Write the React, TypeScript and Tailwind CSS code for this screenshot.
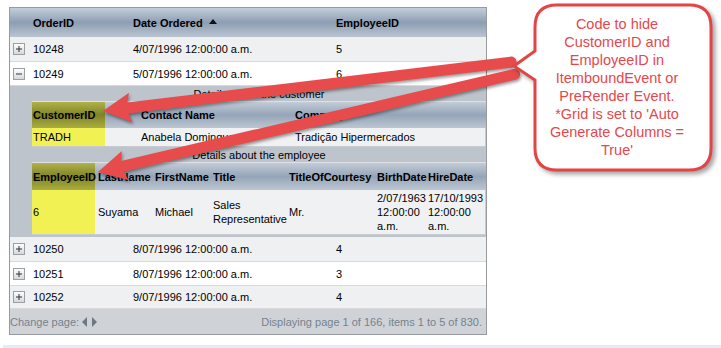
import React from 'react';

const orders = [
  { id: '10248', date: '4/07/1996 12:00:00 a.m.', emp: '5', alt: true },
  { id: '10249', date: '5/07/1996 12:00:00 a.m.', emp: '6', alt: false, open: true },
  { id: '10250', date: '8/07/1996 12:00:00 a.m.', emp: '4', alt: true },
  { id: '10251', date: '8/07/1996 12:00:00 a.m.', emp: '3', alt: false },
  { id: '10252', date: '9/07/1996 12:00:00 a.m.', emp: '4', alt: true },
];

const calloutLines = [
  'Code to hide',
  'CustomerID and',
  'EmployeeID in',
  'ItemboundEvent or',
  'PreRender Event.',
  "*Grid is set to 'Auto",
  'Generate Columns =',
  "True'",
];

function ExpandButton({ open }: { open?: boolean }) {
  return (
    <svg width="12" height="12" viewBox="0 0 12 12" className="ml-[3px]">
      <defs>
        <linearGradient id={open ? 'btnOpen' : 'btnClosed'} x1="0" y1="0" x2="0" y2="1">
          <stop offset="0" stopColor="#ffffff" />
          <stop offset="1" stopColor="#d4d6d9" />
        </linearGradient>
      </defs>
      <rect x="0.5" y="0.5" width="11" height="11" fill={`url(#${open ? 'btnOpen' : 'btnClosed'})`} stroke="#9c9fa3" />
      <line x1="3" y1="6" x2="9" y2="6" stroke="#333" />
      {!open && <line x1="6" y1="3" x2="6" y2="9" stroke="#333" />}
    </svg>
  );
}

function Arrow({ x, y, angle, length }: { x: number; y: number; angle: number; length: number }) {
  return (
    <g transform={`translate(${x} ${y}) rotate(${angle})`}>
      <polygon
        points={`0,0 28,-15 25,-5.5 ${length},-5.5 ${length},5.5 25,5.5 28,15`}
        fill="#e84b4b"
      />
      <circle cx={length} cy={0} r={5.5} fill="#e84b4b" />
    </g>
  );
}

export default function App() {
  return (
    <div className="relative w-[721px] h-[348px] overflow-hidden bg-white font-['Liberation_Sans',Arial,sans-serif] text-[11px] leading-[14px] text-black">
      <div className="ml-[9px] mt-[7px] w-[478px] border border-[#979a9e]">
        {/* header */}
        <div className="flex h-[29px] items-center bg-gradient-to-b from-[#c4ceda] via-[#8d9eb3] to-[#bac5d1] font-bold">
          <div className="w-[22px]" />
          <div className="w-[101px] pl-px">OrderID</div>
          <div className="flex w-[203px] items-center gap-[6px]">
            Date Ordered
            <svg width="8" height="5" viewBox="0 0 8 5" className="-mt-[3px]">
              <polygon points="4,0 8,5 0,5" fill="#111" />
            </svg>
          </div>
          <div className="flex-1">EmployeeID</div>
        </div>

        {orders.map((o, i) => (
          <React.Fragment key={o.id}>
            <div
              className={`flex items-center border-b border-[#d7d9dc] ${o.alt ? 'bg-[#eff0f2]' : 'bg-white'} ${
                i === 0 ? 'h-[25px]' : i === 2 ? 'h-[25px]' : i === 4 ? 'h-[22px] border-b-0' : 'h-[24px]'
              }`}
            >
              <div className="flex w-[22px] items-center">
                <ExpandButton open={o.open} />
              </div>
              <div className="w-[101px] pl-px">{o.id}</div>
              <div className="w-[203px]">{o.date}</div>
              <div className="flex-1">{o.emp}</div>
            </div>

            {o.open && (
              <div className="bg-[#bdc4cc] pl-[22px] pb-[2px]">
                <div className="flex h-[15px] items-center justify-center">Details about the customer</div>

                <div className="flex h-[27px] items-center border-t border-[#dde1e6] bg-gradient-to-b from-[#c3ccd7] via-[#95a5b8] to-[#bcc6d1] font-bold">
                  <div className="flex h-full w-[108px] items-center">
                    <div className="flex h-full w-[73px] items-center bg-gradient-to-b from-[#b0b14a] via-[#808426] to-[#aaad40] pl-px">
                      CustomerID
                    </div>
                  </div>
                  <div className="w-[155px] pl-px">Contact Name</div>
                  <div className="flex-1">Company</div>
                </div>
                <div className="flex h-[19px] items-center border-r border-b border-[#c8ccd1] bg-[#f0f1f3]">
                  <div className="flex h-full w-[108px] items-center">
                    <div className="flex h-full w-[73px] items-center bg-[#f1f153] pl-px">TRADH</div>
                  </div>
                  <div className="w-[155px] pl-px">Anabela Domingues</div>
                  <div className="flex-1">Tradição Hipermercados</div>
                </div>

                <div className="flex h-[15px] items-center justify-center">Details about the employee</div>

                <div className="flex h-[28px] items-center border-t border-[#dde1e6] bg-gradient-to-b from-[#c3ccd7] via-[#95a5b8] to-[#bcc6d1] font-bold">
                  <div className="flex h-full w-[66px] items-center">
                    <div className="flex h-full w-[63px] items-center bg-gradient-to-b from-[#b0b14a] via-[#808426] to-[#aaad40] pl-px">
                      EmployeeID
                    </div>
                  </div>
                  <div className="w-[57px]">LastName</div>
                  <div className="w-[58px]">FirstName</div>
                  <div className="w-[76px]">Title</div>
                  <div className="w-[88px]">TitleOfCourtesy</div>
                  <div className="w-[51px]">BirthDate</div>
                  <div className="flex-1">HireDate</div>
                </div>
                <div className="flex h-[45px] items-center border-r border-b border-[#c8ccd1] bg-[#f0f1f3]">
                  <div className="flex h-full w-[66px] items-center">
                    <div className="flex h-full w-[63px] items-center bg-[#f1f153] pl-px">6</div>
                  </div>
                  <div className="w-[57px]">Suyama</div>
                  <div className="w-[58px]">Michael</div>
                  <div className="w-[76px]">Sales Representative</div>
                  <div className="w-[88px]">Mr.</div>
                  <div className="w-[51px]">2/07/1963 12:00:00 a.m.</div>
                  <div className="flex-1 whitespace-pre-line">{'17/10/1993\n12:00:00\na.m.'}</div>
                </div>
              </div>
            )}
          </React.Fragment>
        ))}

        {/* pager */}
        <div className="flex h-[26px] items-center justify-between border-t border-[#d7d9dc] bg-[#cfd3d8] text-[#77818c]">
          <div className="flex items-center">
            Change page:
            <svg width="20" height="10" viewBox="0 0 20 10" className="ml-[3px]">
              <polygon points="0,5 5,0 5,10" fill="#6d7884" />
              <polygon points="15,5 10,0 10,10" fill="#6d7884" />
            </svg>
          </div>
          <div className="pr-[4px]">Displaying page 1 of 166, items 1 to 5 of 830.</div>
        </div>
      </div>

      <div className="mt-[10px] ml-[3px] h-[3px] bg-[#e5eaf9]" />

      {/* annotation arrows */}
      <svg
        width="721"
        height="348"
        viewBox="0 0 721 348"
        className="pointer-events-none absolute left-0 top-0 drop-shadow-[1px_2px_1.5px_rgba(0,0,0,0.4)]"
      >
        <Arrow x={103} y={111} angle={-6.83} length={411} />
        <Arrow x={98} y={172} angle={-13.2} length={428} />
      </svg>

      {/* callout */}
      <svg
        width="721"
        height="348"
        viewBox="0 0 721 348"
        className="pointer-events-none absolute left-0 top-0 drop-shadow-[3px_3px_2px_rgba(0,0,0,0.35)]"
      >
        <path
          d="M557 5 H689 Q711 5 711 27 V148 Q711 170 689 170 H557 Q535 170 535 148 V80 L514 66 L535 51 V27 Q535 5 557 5 Z"
          fill="#ffffff"
          stroke="#e24545"
          strokeWidth="3"
        />
      </svg>
      <div className="absolute left-[535px] top-[15px] flex w-[164px] flex-col items-center font-['Liberation_Sans',Arial,sans-serif] text-[14.5px] leading-[18px] text-[#e5484c]">
        {calloutLines.map((l) => (
          <div key={l} className="whitespace-nowrap">
            {l}
          </div>
        ))}
      </div>
    </div>
  );
}
